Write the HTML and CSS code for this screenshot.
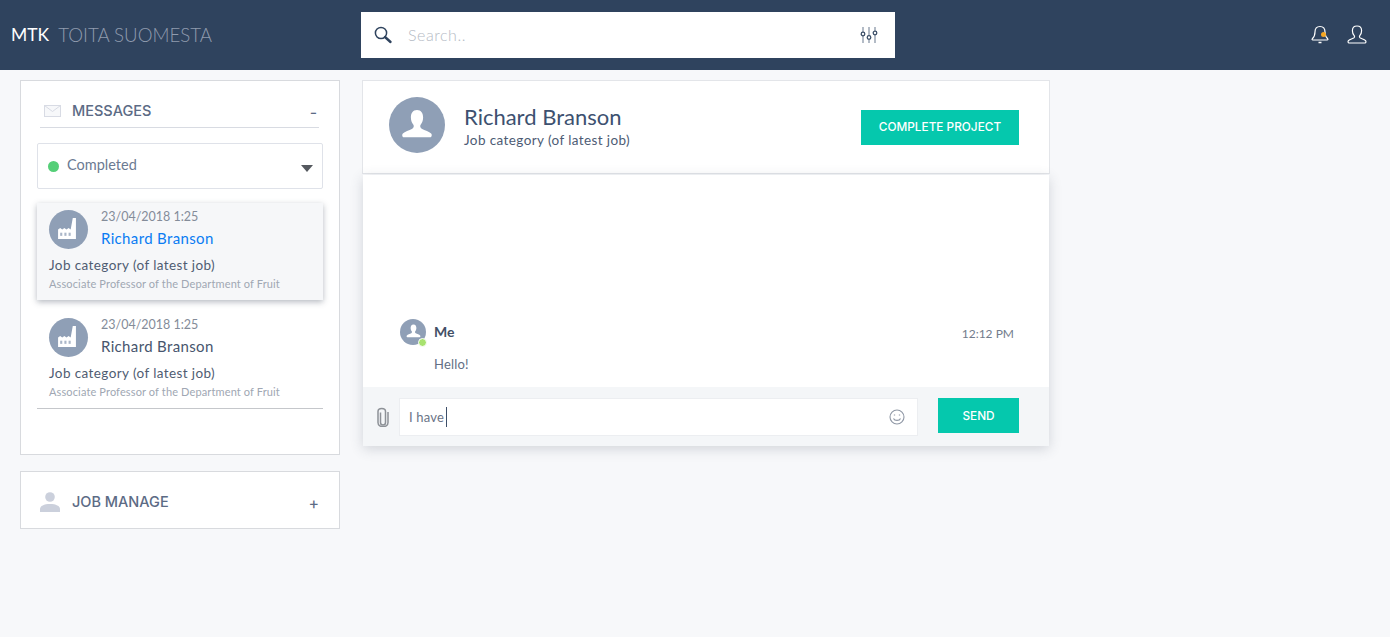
FILE: index.html
```html
<!DOCTYPE html>
<html lang="en">
<head>
<meta charset="utf-8">
<title>MTK Toita Suomesta</title>
<link rel="stylesheet" href="styles.css">
</head>
<body>
<header class="topbar">
  <div class="brand"><span class="brand-main">MTK</span><span class="brand-sub">TOITA SUOMESTA</span></div>
  <div class="search">
    <svg class="search-icon" width="20" height="20" viewBox="0 0 20 20"><circle cx="8" cy="8" r="5.6" fill="none" stroke="#2f435e" stroke-width="1.5"/><path d="M12 12l5.5 5" stroke="#2f435e" stroke-width="2.4" stroke-linecap="round"/></svg>
    <span class="search-placeholder">Search..</span>
    <svg class="filter-icon" width="20" height="20" viewBox="0 0 20 20" fill="none" stroke="#8b97a8" stroke-width="1.3"><path d="M4 2v5M4 11v7M10 2v9M10 14.500v3.500M16 2v4M16 10v8"/><circle cx="4" cy="9" r="1.800" stroke="#3c4f68"/><circle cx="10" cy="12.500" r="1.800" stroke="#3c4f68"/><circle cx="16" cy="8" r="1.800" stroke="#3c4f68"/></svg>
  </div>
  <div class="top-icons">
    <span class="bell">
      <svg width="20" height="22" viewBox="0 0 20 22" fill="none" stroke="#fff" stroke-width="1.200"><path d="M10 2.500c-3.500 0-5 2.700-5 5.500 0 3.500-.8 5-2.700 6.800-.5.600-.2 1.200.5 1.200h14.400c.7 0 1-.6.500-1.200C15.800 13 15 11.500 15 8c0-2.800-1.500-5.500-5-5.500z"/><path d="M8.500 18.500h3" stroke-width="1.500"/></svg>
      <i class="bell-dot"></i>
    </span>
    <svg width="22" height="22" viewBox="0 0 22 22" fill="none" stroke="#fff" stroke-width="1.200"><path d="M11 2c-3 0-4.600 2.300-4.600 4.800 0 2 .8 3.700 1.800 4.800.6.800.4 1.900-.5 2.400-1.700.8-4.100 1.400-5.300 2.600-.6.700-.4 2.400.6 2.400h16c1 0 1.200-1.700.6-2.400-1.200-1.200-3.600-1.800-5.300-2.600-.9-.5-1.100-1.600-.5-2.400 1-1.100 1.800-2.800 1.800-4.800C15.600 4.300 14 2 11 2z"/></svg>
  </div>
</header>
<main class="layout">
  <aside class="sidebar">
    <section class="panel messages">
      <div class="panel-head">
        <svg width="18" height="12" viewBox="0 0 18 12" fill="none" stroke="#d8dbe4"><rect x=".5" y=".5" width="16" height="11" fill="#f7f8fa"/><path d="M.5.5l8 6 8-6"/></svg>
        <span class="panel-title">MESSAGES</span>
        <span class="panel-toggle">-</span>
      </div>
      <div class="select">
        <i class="status-dot"></i><span class="select-label">Completed</span><i class="caret"></i>
      </div>
      <article class="thread thread-active">
        <div class="thread-top">
          <span class="avatar-sm">
            <svg class="factory" width="18" height="21" viewBox="2 1 17 20" fill="#fff"><path d="M16 1h3v20H2v-9l2-1.500 2 1.500 2-1.500 2 1.500 2-1.500 2 1.500z"/><g fill="#aab6c8"><rect x="4" y="15" width="2" height="3"/><rect x="8" y="15" width="2" height="3"/><rect x="12" y="15" width="2" height="3"/></g></svg>
          </span>
          <div>
            <div class="thread-date">23/04/2018 1:25</div>
            <div class="thread-name name-active">Richard Branson</div>
          </div>
        </div>
        <div class="thread-job">Job category (of latest job)</div>
        <div class="thread-role">Associate Professor of the Department of Fruit</div>
      </article>
      <article class="thread thread-plain">
        <div class="thread-top">
          <span class="avatar-sm">
            <svg class="factory" width="18" height="21" viewBox="2 1 17 20" fill="#fff"><path d="M16 1h3v20H2v-9l2-1.500 2 1.500 2-1.500 2 1.500 2-1.500 2 1.500z"/><g fill="#aab6c8"><rect x="4" y="15" width="2" height="3"/><rect x="8" y="15" width="2" height="3"/><rect x="12" y="15" width="2" height="3"/></g></svg>
          </span>
          <div>
            <div class="thread-date">23/04/2018 1:25</div>
            <div class="thread-name">Richard Branson</div>
          </div>
        </div>
        <div class="thread-job">Job category (of latest job)</div>
        <div class="thread-role">Associate Professor of the Department of Fruit</div>
      </article>
    </section>
    <section class="panel job">
      <svg class="job-icon" width="20" height="20" viewBox="0 0 20 20" fill="#cbd0dc"><circle cx="10" cy="5" r="4.800"/><path d="M0 20v-3c0-3 4-5 10-5s10 2 10 5v3z"/></svg>
      <span class="panel-title">JOB MANAGE</span>
      <span class="panel-toggle plus">+</span>
    </section>
  </aside>
  <section class="chat">
    <div class="chat-head">
      <span class="avatar-lg">
        <svg width="32" height="32" viewBox="0 0 34 34" fill="#fff"><path d="M17 1c-4.500 0-6.500 3.500-6.500 8 0 3.500 1.300 6 2.500 7.500 1 1.500.7 3.500-1 4.500-3.500 2-8 3-10 5-1.200 1.300-.8 4 1 4h28c1.800 0 2.200-2.700 1-4-2-2-6.500-3-10-5-1.700-1-2-3-1-4.500 1.200-1.500 2.500-4 2.500-7.500 0-4.500-2-8-6.500-8z"/></svg>
      </span>
      <div class="chat-person">
        <div class="chat-name">Richard Branson</div>
        <div class="chat-job">Job category (of latest job)</div>
      </div>
      <button class="btn btn-complete">COMPLETE PROJECT</button>
    </div>
    <div class="chat-card">
      <div class="chat-body">
        <div class="msg-head">
          <span class="avatar-xs">
            <svg width="15" height="15" viewBox="0 0 34 34" fill="#fff"><path d="M17 1c-4.500 0-6.500 3.500-6.500 8 0 3.500 1.300 6 2.500 7.500 1 1.500.7 3.500-1 4.500-3.500 2-8 3-10 5-1.200 1.300-.8 4 1 4h28c1.800 0 2.200-2.700 1-4-2-2-6.500-3-10-5-1.700-1-2-3-1-4.500 1.200-1.500 2.500-4 2.500-7.500 0-4.500-2-8-6.500-8z"/></svg>
            <i class="online"></i>
          </span>
          <span class="msg-author">Me</span>
          <span class="msg-time">12:12 PM</span>
        </div>
        <div class="msg-text">Hello!</div>
      </div>
      <div class="composer">
        <svg class="clip" width="12" height="20" viewBox="0 0 12 20" fill="none" stroke="#8d9197" stroke-width="1.500"><path d="M3.500 5.500v10c0 3.300 5 3.300 5 0V4.500c0-4-7.500-4-7.500 0v11c0 5.500 10 5.500 10 0V5"/></svg>
        <div class="composer-input">
          <span class="typed">I have</span><i class="cursor"></i>
          <svg class="smile" width="16" height="16" viewBox="0 0 16 16" fill="none" stroke="#8f97a5" stroke-width="1.100"><circle cx="8" cy="8" r="7"/><path d="M4.500 9.500c1 2.500 6 2.500 7 0"/><path d="M5.500 5.500v1M10.500 5.500v1" stroke-width="1.300"/></svg>
        </div>
        <button class="btn btn-send">SEND</button>
      </div>
    </div>
  </section>
</main>
</body>
</html>
```
FILE: styles.css
```css
* { box-sizing: border-box; }
html, body { margin: 0; height: 100%; }
body {
  background: #f7f8fa;
  font-family: Lato, "Open Sans", sans-serif;
  color: #3d4f69;
  overflow: hidden;
}
i { display: block; font-style: normal; }

.topbar {
  height: 70px;
  background: #2f435e;
  display: flex;
  align-items: center;
  position: relative;
}
.brand {
  width: 361px;
  padding-left: 11px;
  display: flex;
  align-items: center;
  font-size: 18.700px;
  line-height: 24px;
}
.brand-main { color: #fff; font-size: 17.500px; }
.brand-sub { color: #8f9bae; margin-left: 9px; font-weight: 300; }
.search {
  width: 534px;
  height: 46px;
  margin-top: -1px;
  background: #fff;
  display: flex;
  align-items: center;
  padding: 0 16px 0 12px;
}
.search-placeholder { margin-left: 15px; font-size: 16px; color: #b4bac4; font-weight: 300; flex: 1; letter-spacing: .55px; }
.top-icons {
  margin-left: auto;
  padding-right: 22px;
  display: flex;
  align-items: center;
  gap: 16px;
}
.bell { position: relative; display: block; height: 22px; }
.bell-dot { position: absolute; right: 4px; top: 8px; width: 5px; height: 5px; border-radius: 50%; background: #f5a623; }

.layout {
  display: flex;
  align-items: flex-start;
  gap: 22px;
  padding: 10px 0 0 20px;
}
.sidebar { width: 320px; display: flex; flex-direction: column; gap: 16px; }
.panel { background: #fff; border: 1px solid #d8dade; }
.messages { height: 375px; padding: 0 16px; }
.panel-head {
  margin: 0 4px 0 3px;
  height: 47px;
  border-bottom: 1px solid #d8dbe2;
  display: flex;
  align-items: center;
  padding: 22px 2px 9px 4px;
}
.panel-title { margin-left: 10px; font-family: Inter, Lato, sans-serif; font-size: 14.500px; font-weight: 500; color: #5c6b85; flex: 1; }
.panel-toggle { font-family: Inter, Lato, sans-serif; font-size: 16px; color: #5c6b85; margin-top: 3px; }
.select {
  height: 46px;
  margin-top: 15px;
  border: 1px solid #dfe2e9;
  border-radius: 2px;
  display: flex;
  align-items: center;
  padding: 0 10px;
}
.status-dot { width: 11px; height: 11px; border-radius: 50%; background: #55cf78; }
.select-label { margin: -3px 0 0 8px; font-size: 14.500px; color: #6b7a92; flex: 1; }
.caret { margin-top: 5px; border: 6px solid transparent; border-top: 7px solid #55595f; border-bottom: 0; margin-right: -1px; }

.thread { height: 97px; padding: 5px 12px; }
.thread-active {
  margin-top: 14px;
  background: #f6f7f9;
  box-shadow: 0 2px 6px rgba(60, 70, 90, .38);
}
.thread-plain { margin-top: 11px; height: 98px; border-bottom: 1px solid #c5c7cb; }
.thread-top { display: flex; gap: 13px; height: 45px; }
.avatar-sm {
  width: 39px;
  height: 39px;
  margin-top: 2px;
  border-radius: 50%;
  background: #8f9fb6;
  display: flex;
  align-items: center;
  justify-content: center;
  flex: none;
}
.factory { margin: 0 3px 2px 0; }
.thread-date { font-size: 12.500px; line-height: 17px; color: #848c99; }
.thread-name { font-size: 15px; line-height: 20px; margin-top: 3px; color: #47556d; letter-spacing: .35px; }
.name-active { color: #0a7cf3; }
.thread-job { font-size: 13.500px; line-height: 18px; margin-top: 3px; color: #4f5c72; letter-spacing: .4px; }
.thread-role { font-size: 11px; line-height: 15px; margin-top: 2px; color: #a0a7b3; letter-spacing: .13px; }

.job {
  height: 58px;
  padding: 3px 20px 0 19px;
  display: flex;
  align-items: center;
}
.job-icon { margin-top: 1px; }
.job .panel-title { margin-left: 12px; }
.plus { margin-top: 3px; font-size: 16px; }

.chat { width: 688px; }
.chat-head {
  height: 94px;
  background: #fff;
  border: 1px solid #e3e5e9;
  display: flex;
  align-items: center;
  padding: 0 30px 4px 26px;
}
.avatar-lg {
  width: 56px;
  height: 56px;
  border-radius: 50%;
  background: #8f9fb6;
  display: flex;
  align-items: center;
  justify-content: center;
}
.chat-person { margin: 2px 0 0 19px; flex: 1; }
.chat-name { font-size: 22px; line-height: 28px; color: #3d5170; }
.chat-job { font-size: 13.500px; line-height: 18px; color: #4d5b74; letter-spacing: .4px; }
.btn {
  border: 0;
  background: #05c8ad;
  color: #fff;
  font-family: Inter, Lato, sans-serif;
  font-size: 11.800px;
  font-weight: 500;
  padding: 0;
}
.btn-complete { width: 158px; height: 35px; margin-top: 4px; }
.chat-card {
  margin: 1px 1px 0;
  background: #fff;
  box-shadow: 0 3px 12px rgba(60, 70, 90, .2);
}
.chat-body { height: 212px; padding: 143px 35px 0 37px; }
.msg-head { display: flex; align-items: center; height: 27px; }
.avatar-xs {
  position: relative;
  width: 26px;
  height: 26px;
  border-radius: 50%;
  background: #8f9fb6;
  display: flex;
  align-items: center;
  justify-content: center;
}
.online {
  position: absolute;
  right: -1px;
  bottom: -2px;
  width: 7px;
  height: 7px;
  border-radius: 50%;
  background: #a8e26f;
  border: 1px solid #fff;
  box-sizing: content-box;
}
.msg-author { margin-left: 8px; font-size: 14px; font-weight: 700; color: #424f66; flex: 1; }
.msg-time { margin-top: 3px; font-size: 12px; color: #727c8c; }
.msg-text { margin: 10px 0 0 34px; font-size: 13px; line-height: 18px; color: #626f85; letter-spacing: .2px; }
.composer {
  height: 59px;
  background: #f4f6f8;
  display: flex;
  align-items: center;
  padding: 1px 30px 0 14px;
}
.clip { flex: none; }
.composer-input {
  margin-left: 10px;
  width: 519px;
  height: 38px;
  background: #fff;
  border: 1px solid #eceef1;
  display: flex;
  align-items: center;
  padding: 0 12px 0 9px;
}
.typed { font-size: 13px; color: #6b7487; letter-spacing: .2px; margin-top: -1px; }
.cursor { width: 1px; height: 20px; background: #3d4f69; margin-left: 2px; }
.smile { margin-left: auto; }
.btn-send { margin: -3px 0 0 20px; width: 81px; height: 35px; }
```
